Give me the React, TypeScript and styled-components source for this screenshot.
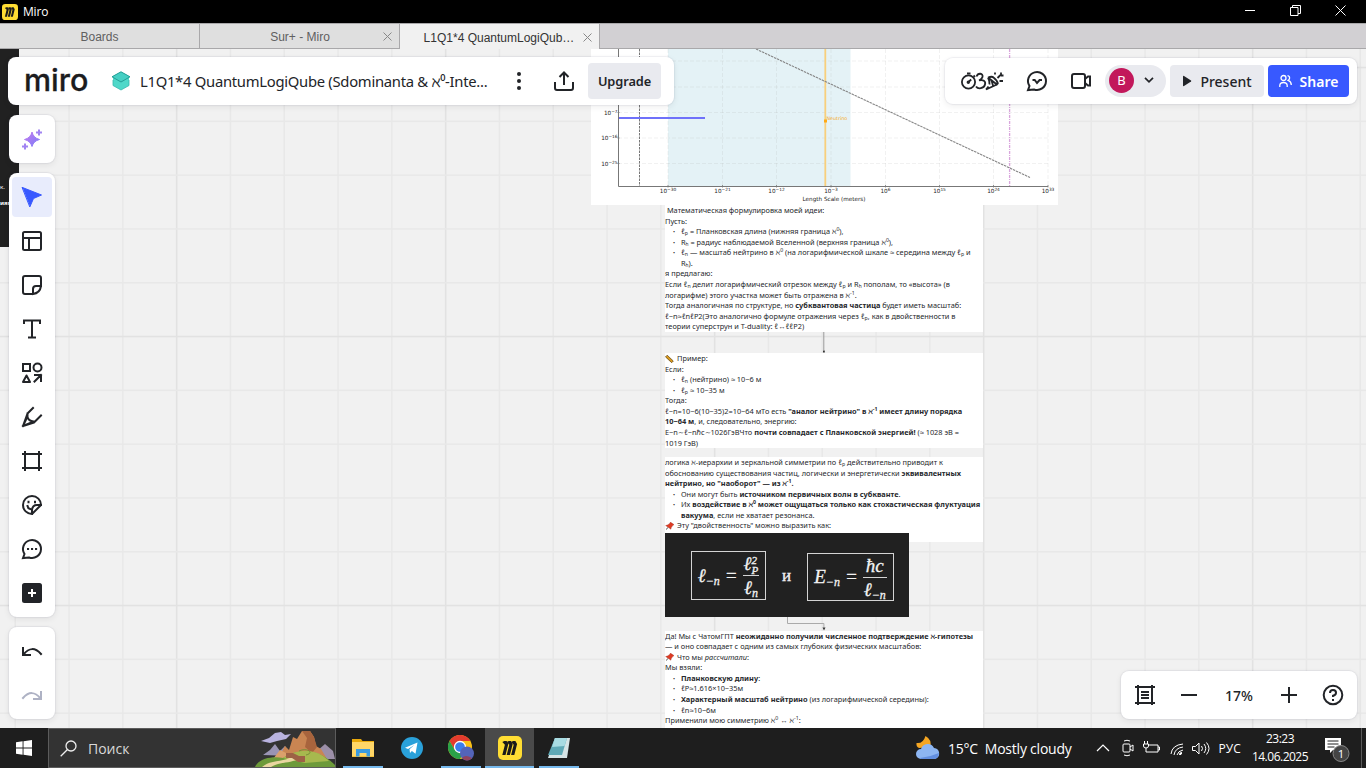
import React from "react";
import styled, { createGlobalStyle } from "styled-components";

const Global = createGlobalStyle`
  * { box-sizing: border-box; }
  body { margin: 0; overflow: hidden; font-family: "Noto Sans", sans-serif; color: #222428; }
  svg { display: block; flex: none; }
`;

const Window = styled.div`
  width: 1366px; height: 768px; display: flex; flex-direction: column; overflow: hidden; background: #000;
`;

/* ---------- title bar and tabs ---------- */
const TitleBar = styled.header`
  height: 23px; display: flex; align-items: center; padding-left: 2px; background: #000; color: #fff;
  font: 12px "Open Sans", sans-serif; flex: none;
`;
const TitleText = styled.span`margin-left: 5px; flex: 1; letter-spacing: -0.2px;`;
const WindowButtons = styled.div`
  display: flex; align-items: center; gap: 34px; padding: 0 20px 3px 0;
`;
const TabStrip = styled.nav`
  height: 26px; flex: none; display: flex; background: #d2d0d3; border-top: 1px solid #a9a8aa; border-bottom: 1px solid #a9a8aa;
  font: 12px "Liberation Sans", sans-serif;
`;
const Tab = styled.div<{ $active?: boolean }>`
  width: 200px; height: ${(p) => (p.$active ? 25 : 24)}px; display: flex; align-items: center; padding: 1px 7px 0 20px;
  border-right: 1px solid #a9a8aa; background: ${(p) => (p.$active ? "#f1f1f1" : "#dfdfdf")};
  color: ${(p) => (p.$active ? "#333" : "#606060")};
`;
const TabLabel = styled.span<{ $pad?: number }>`
  flex: 1; text-align: center; white-space: nowrap; padding-right: ${(p) => p.$pad ?? 0}px; padding-top: 1px;
`;

/* ---------- board ---------- */
const Board = styled.main`
  position: relative; height: 679px; flex: none; overflow: hidden; background: #f1f1f1;
`;
const GridSvg = styled.svg`position: absolute; inset: 0;`;
const Item = styled.div<{ $x: number; $y: number; $w?: number; $h?: number }>`
  position: absolute; left: ${(p) => p.$x}px; top: ${(p) => p.$y}px;
  ${(p) => (p.$w ? `width: ${p.$w}px;` : "")} ${(p) => (p.$h ? `height: ${p.$h}px;` : "")}
`;
const Note = styled(Item)`background: #fff; overflow: hidden; color: #26282c;`;
const Line = styled.div<{ $indent?: boolean; $bullet?: boolean }>`
  height: 10.58px; line-height: 10.58px; font-size: 7.39px; white-space: nowrap; display: flow-root;
  padding-left: ${(p) => (p.$indent || p.$bullet ? 16 : 0)}px;
  sub, sup { font-size: 5.2px; line-height: 0; }
  sub { vertical-align: -1.4px; }
  sup { vertical-align: 2.6px; }
  svg { display: inline-block; vertical-align: -1.5px; margin-right: 3px; }
  ${(p) => (p.$bullet ? `&::before { content: "•"; display: inline-block; width: 8px; margin-left: -8px; font-size: 5.500px; }` : "")}
`;
const DarkImage = styled(Item)`
  background: #212121; color: #f2f2f2; display: flex; align-items: flex-start; padding: 18px 0 0 26px;
  font: 19px/1 "Liberation Serif", serif; -webkit-text-stroke: 0.3px #f2f2f2;
`;
const Formula = styled.div<{ $w: number; $h: number; $top?: number }>`
  width: ${(p) => p.$w}px; height: ${(p) => p.$h}px; border: 1px solid #d4d4d4; margin-top: ${(p) => p.$top ?? 0}px;
  display: flex; align-items: center; justify-content: center; gap: 5px; font-style: italic; white-space: nowrap;
  sub { font-size: 12px; line-height: 0; vertical-align: -3px; }
`;
const Fraction = styled.span`
  display: flex; flex-direction: column; align-items: center;
  span { height: 23px; line-height: 23px; padding: 0 1px; }
  span + span { border-top: 1px solid #d4d4d4; }
`;
const PowerSub = styled.i`
  display: inline-flex; flex-direction: column; vertical-align: 6px; font-size: 11px; line-height: 10px; height: 10px;
`;
const And = styled.span`width: 41px; text-align: center; margin-top: 16px; font-size: 17px;`;
const SideImage = styled(Item)`
  background: #212121; color: #fff; font-size: 6px; line-height: 16px; padding-top: 130px; overflow: hidden; white-space: nowrap;
`;

/* ---------- floating panels ---------- */
const Panel = styled(Item)`
  background: #fff; border-radius: 8px; display: flex; align-items: center;
  box-shadow: 0 0 1px 1px rgba(34, 36, 80, 0.06), 0 2px 6px rgba(34, 36, 40, 0.08);
`;
const Brand = styled.span`
  width: 66px; font: 500 30.5px/48px Inter, sans-serif; color: #1c1c1e; letter-spacing: 0; margin: -3px 0 0 16px;
  -webkit-text-stroke: 0.3px #1c1c1e;
`;
const BoardName = styled.span`font-size: 14.8px; letter-spacing: -0.28px; margin-left: 9px; width: 376px; white-space: nowrap;`;
const Button = styled.button<{ $primary?: boolean; $w: number; $h: number }>`
  width: ${(p) => p.$w}px; height: ${(p) => p.$h}px; border: 0; border-radius: 4px; display: flex; align-items: center;
  justify-content: center; gap: 8px; padding: 0; font: 600 14px "Noto Sans", sans-serif; flex: none;
  background: ${(p) => (p.$primary ? "#3859ff" : "#e9eaef")}; color: ${(p) => (p.$primary ? "#fff" : "#222428")};
`;
const UpgradeButton = styled(Button)`font-size: 12.800px; letter-spacing: -0.1px;`;
const PresentButton = styled(Button)`margin: 0 4px; font-weight: 500;`;
const Tools = styled(Panel)`flex-direction: column; padding: 4px 0;`;
const Tool = styled.div<{ $active?: boolean }>`
  width: 40px; height: 40px; margin-bottom: 4px; border-radius: 4px; display: flex; align-items: center; justify-content: center;
  flex: none; background: ${(p) => (p.$active ? "#e8ecfc" : "transparent")};
`;
const UserPill = styled.div`
  width: 61px; height: 32px; border-radius: 16px; background: #e9eaef; display: flex; align-items: center; padding: 0 0 2px 4px; gap: 10px;
`;
const Avatar = styled.span`
  width: 25px; height: 25px; border-radius: 50%; background: #c2185b; color: #fff; font-size: 13px; line-height: 25px; text-align: center;
`;
const Zoom = styled.span`font-size: 14px; font-weight: 500; width: 32px; text-align: center;`;

/* ---------- taskbar ---------- */
const Taskbar = styled.footer`
  height: 40px; flex: none; display: flex; align-items: stretch; background: #1e1e1e; color: #fff;
  font-family: "Open Sans", sans-serif; font-size: 14px;
`;
const Start = styled.div`width: 48px; display: flex; align-items: center; justify-content: center;`;
const Search = styled.div`
  width: 288px; border: 1px solid #5c5c5c; background: #333; display: flex; align-items: center; color: #d9d9d9; padding-left: 11px;
`;
const SearchText = styled.span`margin-left: 11px; flex: 1;`;
const TaskApp = styled.div<{ $active?: boolean; $open?: boolean }>`
  width: 49px; display: flex; align-items: center; justify-content: center; position: relative;
  background: ${(p) => (p.$active ? "#4a4a4a" : "transparent")};
  ${(p) =>
    p.$open
      ? `&::after { content: ""; position: absolute; bottom: 0; left: ${p.$active ? 0 : 5}px; right: ${p.$active ? 0 : 4}px; height: 2px; background: #76b9ed; }`
      : ""}
`;
const Apps = styled.div`display: flex; margin-left: 2px; flex: 1;`;
const Weather = styled.div`display: flex; align-items: center; width: 180px; gap: 7px; white-space: nowrap; letter-spacing: -0.22px;`;
const Tray = styled.div`display: flex; align-items: center; gap: 8.500px; width: 155px;`;
const Language = styled.span`font-size: 12px;`;
const Clock = styled.div`
  width: 58px; font-size: 12px; line-height: 18px; text-align: center; padding-top: 2px; letter-spacing: -0.5px; white-space: nowrap;
`;
const Notice = styled.div`width: 52px; display: flex; align-items: center; padding-left: 15px;`;
const Edge = styled.div`width: 5px; border-left: 1px solid #5a5a5a;`;

const Icon = ({ s = 24, w = 2, c = "#222428", children }: { s?: number; w?: number; c?: string; children: React.ReactNode }) => (
  <svg width={s} height={s} viewBox="0 0 24 24" fill="none" stroke={c} strokeWidth={w} strokeLinecap="square">
    {children}
  </svg>
);

const MiroMark = ({ s }: { s: number }) => (
  <svg width={s} height={s} viewBox="0 0 24 24">
    <rect width="24" height="24" rx="5" fill="#ffdd33" />
    {[4.3, 8.7, 13.1].map((x) => (
      <path key={x} d={`M${x} 6l2-1h2.300l1.700 3-2.800 11h-3.200l2.600-10.200z`} fill="#1b1b1b" />
    ))}
  </svg>
);

const CloseGlyph = () => (
  <svg width="9" height="9" viewBox="0 0 9 9" stroke="#888"><path d="m.5.500 8 8m0-8-8 8" /></svg>
);

const Pin = () => (
  <svg width="9" height="8" viewBox="0 0 9 8">
    <path d="M1 7.500 3.400 5.200" stroke="#555" strokeWidth="1" />
    <path d="M.6 3.600 3 2.700 4.900 1.200 5.400.1 9 2.600 7.800 3.600 6.400 5.300 5.900 7.300z" fill="#dd3b24" stroke="#8c2a1c" strokeWidth="0.300" />
  </svg>
);
const Ruler = () => (
  <svg width="9" height="8" viewBox="0 0 9 8">
    <path d="M.5 1.900 2.200.2 8.300 6 6.700 7.700z" fill="#d99a1c" stroke="#5c3f10" strokeWidth="0.700" />
  </svg>
);

const GridLines = () => {
  const steps = Array.from({ length: 26 }, (_, i) => i);
  return (
    <GridSvg width="1366" height="679">
      {steps.map((i) => (
        <rect key={"v" + i} x={14.5 + i * 53.8} y="0" width="1.5" height="679" fill={i % 5 === 3 ? "#e2e2e2" : "#e8e8e8"} />
      ))}
      {steps.slice(0, 13).map((i) => (
        <rect key={"h" + i} x="0" y={17.8 + i * 53.8} width="1366" height="1.5" fill={i % 5 === 0 ? "#e2e2e2" : "#e8e8e8"} />
      ))}
    </GridSvg>
  );
};

const xTicks: [number, string][] = [
  [77, "−30"], [131.5, "−21"], [185.5, "−12"], [240, "−3"], [294.5, "6"], [348.5, "15"], [402.5, "24"], [457, "33"],
];
const yTicks: [number, string][] = [[63.5, "−7"], [89, "−16"], [114.5, "−25"]];

const Chart = () => (
  <svg width="467" height="156" viewBox="0 0 467 156" fontFamily="DejaVu Sans" fontSize="5.700" fill="#222">
    <rect width="467" height="156" fill="#fff" />
    <rect x="77" width="182.500" height="137" fill="#e4f2f6" />
    <g stroke="#b0b0b0" strokeOpacity="0.250" strokeWidth="0.700" strokeDasharray="4 2">
      {xTicks.map(([x]) => <path key={x} d={`M${x} 0V137`} />)}
      {[12, 38, 63.5, 89, 114.5].map((y) => <path key={y} d={`M27 ${y}H457`} />)}
    </g>
    <path d="M234.300 0V137" stroke="#f8cf7c" strokeWidth="1.800" />
    <path d="M48.500 0V137" stroke="#777" strokeWidth="1" strokeDasharray="2.500 1" />
    <path d="M418.600 0V137" stroke="#d9a5dc" strokeWidth="1.300" strokeDasharray="3 1 1 1" />
    <path d="M165 0 439 128.500" stroke="#858585" strokeWidth="1.100" strokeDasharray="2.500 .8" />
    <path d="M27 69h87" stroke="#6f71fa" strokeWidth="1.800" />
    <path d="M27.500 0V137.500H457" stroke="#777" strokeWidth="1" fill="none" />
    <g stroke="#777" strokeWidth="0.800">
      {xTicks.map(([x]) => <path key={x} d={`M${x} 136v2.500`} />)}
      {yTicks.map(([y]) => <path key={y} d={`M26.500 ${y}h2`} />)}
    </g>
    <rect x="233" y="70.500" width="3" height="3" fill="#ffa914" />
    <text x="235.500" y="71" fontSize="4.800" fill="#f6a91c">Neutrino</text>
    {xTicks.map(([x, e]) => (
      <text key={x} x={x} y="143.500" textAnchor="middle">10<tspan dy="-1.800" fontSize="4.300">{e}</tspan></text>
    ))}
    {yTicks.map(([y, e]) => (
      <text key={y} x="26.500" y={y + 2} textAnchor="end">10<tspan dy="-1.800" fontSize="4.300">{e}</tspan></text>
    ))}
    <text x="243" y="151.500" textAnchor="middle" fontSize="5.700">Length Scale (meters)</text>
  </svg>
);

const Landscape = () => (
  <svg width="80" height="38" viewBox="0 0 80 38">
    <path d="M6 12 14 9 20 4 26 3 30 6 36 5 31 10 22 12 15 14z" fill="#b9b3df" />
    <path d="M8 26 15 21 20 15 25 22 30 17 36 27z" fill="#9a94b4" />
    <path d="M62 22 70 15 78 22 80 30H60z" fill="#9c8fa8" />
    <path d="M24 28 30 17 34 21 38 8 42 10 47 2 55 2 59 8 61 17 66 20 72 30z" fill="#c98552" />
    <path d="M47 2 52 9 50 18 57 24 62 18 59 8 55 2z" fill="#a8643d" />
    <path d="M18 30 25 21 31 24 36 31z" fill="#dba06b" />
    <path d="M0 38C4 29 18 27 28 29 42 20 62 18 80 36V38z" fill="#6d9a3a" />
    <path d="M28 29C45 18 62 20 74 32L50 34z" fill="#a7b94e" />
    <path d="M7 38C16 30 28 34 38 27l5 3C34 35 26 32 16 38z" fill="#e9d6a0" />
    <path d="M31 24h7l6 3h6v6h-7l-6-4h-6z" fill="#9d6245" />
    <path d="M44 22c8-4 16 2 7 4" stroke="#788f36" fill="none" />
  </svg>
);

export default function App() {
  return (
    <Window>
      <Global />
      <TitleBar>
        <MiroMark s={16} />
        <TitleText>Miro</TitleText>
        <WindowButtons>
          <svg width="11" height="11" viewBox="0 0 11 11"><path d="M0 5.500h10" stroke="#fff" /></svg>
          <svg width="11" height="11" viewBox="0 0 11 11" fill="none" stroke="#fff"><path d="M.5 2.500h7.500v8H.5zM2.500 2.500v-2h8v8H8" /></svg>
          <svg width="11" height="11" viewBox="0 0 11 11" stroke="#fff"><path d="m.5.500 10 10m0-10-10 10" /></svg>
        </WindowButtons>
      </TitleBar>
      <TabStrip>
        <Tab><TabLabel $pad={13}>Boards</TabLabel></Tab>
        <Tab><TabLabel $pad={3}>Sur+ - Miro</TabLabel><CloseGlyph /></Tab>
        <Tab $active><TabLabel $pad={5}>L1Q1*4 QuantumLogiQub…</TabLabel><CloseGlyph /></Tab>
      </TabStrip>

      <Board>
        <GridLines />
        <SideImage $x={0} $y={0} $w={19} $h={198}><div>к.</div><b>иям</b></SideImage>
        <Item $x={591} $y={0}><Chart /></Item>

        <Note $x={665} $y={156} $w={318} $h={127}>
          <Line>&nbsp;Математическая формулировка моей идеи:</Line>
          <Line>Пусть:</Line>
          <Line $bullet>ℓ<sub>p</sub> = Планковская длина (нижняя граница ℵ<sup>0</sup>),</Line>
          <Line $bullet>Rₕ = радиус наблюдаемой Вселенной (верхняя граница ℵ<sup>0</sup>),</Line>
          <Line $bullet>ℓ<sub>n</sub> — масштаб нейтрино в ℵ<sup>0</sup> (на логарифмической шкале ≈ середина между ℓ<sub>p</sub> и</Line>
          <Line $indent>Rₕ).</Line>
          <Line>я предлагаю:</Line>
          <Line>Если ℓ<sub>n</sub> делит логарифмический отрезок между ℓ<sub>p</sub> и Rₕ пополам, то «высота» (в</Line>
          <Line>логарифме) этого участка может быть отражена в ℵ<sup>-1</sup>.</Line>
          <Line>Тогда аналогичная по структуре, но <b>субквантовая частица</b> будет иметь масштаб:</Line>
          <Line>ℓ−n≈ℓnℓP2(Это аналогично формуле отражения через ℓ<sub>p</sub>, как в двойственности в</Line>
          <Line>теории суперструн и T-duality: ℓ↔ℓℓP2)</Line>
        </Note>
        <Note $x={665} $y={304} $w={318} $h={95}>
          <Line><Ruler />Пример:</Line>
          <Line>Если:</Line>
          <Line $bullet>ℓ<sub>n</sub> (нейтрино) ≈ 10−6 м</Line>
          <Line $bullet>ℓ<sub>p</sub> ≈ 10−35 м</Line>
          <Line>Тогда:</Line>
          <Line>ℓ−n=10−6(10−35)2=10−64 мТо есть <b>"аналог нейтрино" в ℵ<sup>-1</sup> имеет длину порядка</b></Line>
          <Line><b>10−64 м</b>, и, следовательно, энергию:</Line>
          <Line>E−n∼ℓ−nℏc∼1026ГэВЧто <b>почти совпадает с Планковской энергией!</b> (≈ 1028 эВ =</Line>
          <Line>1019 ГэВ)</Line>
        </Note>
        <Note $x={665} $y={408} $w={318} $h={85}>
          <Line>логика ℵ-иерархии и зеркальной симметрии по ℓ<sub>p</sub> действительно приводит к</Line>
          <Line>обоснованию существования частиц, логически и энергетически <b>эквивалентных</b></Line>
          <Line><b>нейтрино, но "наоборот" — из ℵ<sup>-1</sup>.</b></Line>
          <Line $bullet>Они могут быть <b>источником первичных волн в субкванте</b>.</Line>
          <Line $bullet>Их <b>воздействие в ℵ<sup>0</sup> может ощущаться только как стохастическая флуктуация</b></Line>
          <Line $indent><b>вакуума</b>, если не хватает резонанса.</Line>
          <Line><Pin />Эту "двойственность" можно выразить как:</Line>
        </Note>
        <DarkImage $x={665} $y={483.5} $w={244} $h={84.5}>
          <Formula $w={75} $h={49}>
            <span>ℓ<sub>−n</sub></span><span>=</span>
            <Fraction><span>ℓ<PowerSub><i>2</i><i>P</i></PowerSub></span><span>ℓ<sub>n</sub></span></Fraction>
          </Formula>
          <And>и</And>
          <Formula $w={87} $h={48} $top={2}>
            <span>E<sub>−n</sub></span><span>=</span>
            <Fraction><span>ħc</span><span>ℓ<sub>−n</sub></span></Fraction>
          </Formula>
        </DarkImage>
        <Item $x={780} $y={283}>
          <svg width="50" height="21" viewBox="0 0 50 21"><path d="M43.800 0v18" stroke="#999" fill="none" /><path d="M43 18.500h1.800v2h-1.800z" fill="#333" /></svg>
        </Item>
        <Item $x={780} $y={568}>
          <svg width="50" height="14" viewBox="0 0 50 14"><path d="M7.500 0v6.500h36.400v4" stroke="#aaa" fill="none" /><path d="m42.500 10.500h3L44 13.500z" fill="#333" /></svg>
        </Item>
        <Note $x={665} $y={581.5} $w={318} $h={98}>
          <Line>Да! Мы с ЧатомГПТ <b>неожиданно получили численное подтверждение ℵ-гипотезы</b></Line>
          <Line>— и оно совпадает с одним из самых глубоких физических масштабов:</Line>
          <Line><Pin />Что мы <i>рассчитали</i>:</Line>
          <Line>Мы взяли:</Line>
          <Line $bullet><b>Планковскую длину</b>:</Line>
          <Line $bullet>ℓP≈1.616×10−35м</Line>
          <Line $bullet><b>Характерный масштаб нейтрино</b> (из логарифмической середины):</Line>
          <Line $bullet>ℓn≈10−6м</Line>
          <Line>Применили мою симметрию ℵ<sup>0</sup> ↔ ℵ<sup>-1</sup>:</Line>
        </Note>

        <Panel $x={8} $y={8} $w={666} $h={48}>
          <Brand>miro</Brand>
          <svg width="20" height="20" viewBox="0 0 20 20" style={{ marginLeft: 21 }}>
            <path d="M10 .8 18 5.500V14.500L10 19 2 14.500V5.500z" fill="#4fd8c9" />
            <path d="M10 .8 19 5.800 10 11 1 5.800z" fill="#45cfc3" stroke="#249e96" strokeWidth="1" />
            <path d="M2 9v5.500L10 19l8-4.500V9" fill="none" stroke="#35b9ad" strokeWidth=".8" />
          </svg>
          <BoardName>L1Q1*4 QuantumLogiQube (Sdominanta &amp; ℵ⁰-Inte...</BoardName>
          <svg width="6" height="20" viewBox="0 0 6 20" fill="#222428"><circle cx="3" cy="3" r="2" /><circle cx="3" cy="10" r="2" /><circle cx="3" cy="17" r="2" /></svg>
          <svg width="22" height="22" viewBox="0 0 22 22" fill="none" stroke="#222428" strokeWidth="2" style={{ margin: "0 13px 0 31px" }}>
            <path d="M2 12v6q0 2 2 2h14q2 0 2-2v-6M11 15V3M6.500 7 11 2.500 15.500 7" />
          </svg>
          <UpgradeButton $w={73} $h={36}>Upgrade</UpgradeButton>
        </Panel>

        <Panel $x={945} $y={9} $w={412} $h={46}>
          <svg width="44" height="24" viewBox="0 0 44 24" fill="none" stroke="#222428" strokeWidth="1.800" style={{ marginLeft: 15 }}>
            <circle cx="8.500" cy="13" r="6.600" /><path d="M7 4.500h3.500M8.500 13l2.700-2.500M13.500 6.500l1.500 1.500" /><circle cx="8.300" cy="13.300" r=".8" />
            <path d="M16.500 7.500C18 3.500 23.500 4 22.500 8c-.4 1.700-2 2.800-3.500 3.500 4-1.200 7 .5 6 4-1 4.300-7 5-9 2" />
            <path d="M26 20.500 38 15M26 20.500l2.500-3M28 8.500l9.500 7.500M28 8.500q2 4 1.500 7M28 8.500q4-1.500 5.500 0 4 3 4.500 6.500M31.500 11.500l1.500 5M35 5.500V3.500M37.500 9l3.500-3.500M39.500 12H43M41 6.500V3.500M41 6.500h2.500" />
          </svg>
          <svg width="24" height="24" viewBox="0 0 24 24" fill="none" stroke="#222428" strokeWidth="2" style={{ marginLeft: 21 }}>
            <path d="M4.500 17A9 9 0 1 1 9 20.500L3 21zM7.500 11h2.200l2.300 3 2.600-3H17" />
          </svg>
          <svg width="24" height="24" viewBox="0 0 24 24" fill="none" stroke="#222428" strokeWidth="2" style={{ margin: "0 12px 0 20px" }}>
            <rect x="3" y="5" width="13" height="14" rx="2" /><path d="m16 10 3-2.500h2v9h-2L16 14" />
          </svg>
          <UserPill>
            <Avatar>B</Avatar>
            <svg width="10" height="6" viewBox="0 0 10 6" fill="none" stroke="#222428" strokeWidth="1.700"><path d="m1 .8 4 4 4-4" /></svg>
          </UserPill>
          <PresentButton $w={94} $h={32}>
            <svg width="10" height="12" viewBox="0 0 10 12"><path d="M1 1.500v9q0 1 1 .5l7-4.500q.6-.5 0-1L2 1Q1 .5 1 1.500z" fill="#222428" /></svg>
            Present
          </PresentButton>
          <Button $primary $w={81} $h={32}>
            <svg width="13" height="14" viewBox="0 0 13 14" fill="none" stroke="#fff" strokeWidth="1.300">
              <circle cx="4.500" cy="4" r="2.500" /><path d="M.8 13v-1.500Q1 8.500 4.500 8.500t3.700 3V13M8.500 1.600q2.500.4 2 3-.3 1.200-1.300 1.800Q12.300 7.500 12.300 11" />
            </svg>
            Share
          </Button>
        </Panel>

        <Panel $x={9} $y={66} $w={46} $h={48}>
          <svg width="46" height="48" viewBox="0 0 46 48">
            <defs><linearGradient id="spark" x1="0" y1="0" x2="1" y2="1"><stop offset="0" stopColor="#c47bef" /><stop offset="1" stopColor="#7b7cf8" /></linearGradient></defs>
            <path d="M23 17q1.500 6 7.500 7.500Q24.500 26 23 31.500 21.500 26 15.500 24.500 21.500 23 23 17z" fill="url(#spark)" stroke="url(#spark)" strokeLinejoin="round" />
            <path d="M30 14.500v6M27 17.500h6M16 28.500v6M13 31.500h6" stroke="#a184f2" strokeWidth="2" />
          </svg>
        </Panel>

        <Tools $x={9} $y={124} $w={46} $h={444}>
          <Tool $active><Icon><path d="m2.500 2.500 19 7.500-8 3.500L10 21.500z" fill="#3859ff" stroke="#3859ff" strokeWidth="1" strokeLinejoin="round" /></Icon></Tool>
          <Tool><Icon><rect x="3" y="3" width="18" height="18" rx="1.500" /><path d="M3 9h18M9 9v12" /></Icon></Tool>
          <Tool><Icon><path d="M13 21H5q-2 0-2-2V5q0-2 2-2h14q2 0 2 2v8q-1 7-8 8v-5q0-3 3-3h5" /></Icon></Tool>
          <Tool><Icon><path d="M4 6V3.500h16V6M12 3.500V20.500M9 20.500h6" /></Icon></Tool>
          <Tool><Icon><rect x="3" y="3" width="7" height="7" /><circle cx="17.500" cy="6.500" r="4" /><path d="m6.500 14.500 3.500 6.500H3zM14.500 20.500 21 14M15 14h6v6" strokeLinejoin="round" /></Icon></Tool>
          <Tool><Icon><path d="M13 3 7.500 8.500 3 21l11-3.500L21 10.500M7.500 8.500V12q1 4 6 4.500M3 21l4-8.500M3 21l9.500-4" strokeLinejoin="round" /></Icon></Tool>
          <Tool><Icon><path d="M5 3v18M19 3v18M3 5h18M3 19h18" /></Icon></Tool>
          <Tool><Icon><path d="M12 21A9 9 0 1 1 21 12L12 21v-4q.5-5 5-5h4" strokeLinejoin="round" /><path d="M7.500 13q.5 3 3.500 3.300" /><path d="M8.500 8.800v.4M15 8.800v.4" /></Icon></Tool>
          <Tool><Icon><path d="M4.500 17A9 9 0 1 1 9 20.500L3 21z" /><path d="M8 12h.1M12 12h.1M16 12h.1" /></Icon></Tool>
          <Tool><Icon><rect x="3" y="3" width="18" height="18" rx="1.500" fill="#222428" /><path d="M12 9v6M9 12h6" stroke="#fff" /></Icon></Tool>
        </Tools>

        <Tools $x={9} $y={578} $w={46} $h={92}>
          <Tool><Icon><path d="M3 9v7h7M3.500 15.500Q12 5 21 15" /></Icon></Tool>
          <Tool><Icon c="#aeb2c4"><path d="M21 9v7h-7M20.500 15.500Q12 5 3 15" /></Icon></Tool>
        </Tools>

        <Panel $x={1121} $y={622} $w={236} $h={48}>
          <svg width="24" height="24" viewBox="0 0 24 24" fill="none" stroke="#222428" strokeWidth="2" style={{ marginLeft: 12 }}>
            <path d="M5 2v20M19 2v20M2 4h20M2 20h20M8 9h8M8 12h8M8 15h8" />
          </svg>
          <svg width="16" height="16" viewBox="0 0 16 16" stroke="#222428" strokeWidth="2" style={{ margin: "0 26px 0 24px" }}><path d="M0 8h16" /></svg>
          <Zoom>17%</Zoom>
          <svg width="16" height="16" viewBox="0 0 16 16" stroke="#222428" strokeWidth="2" style={{ margin: "0 24px 0 26px" }}><path d="M0 8h16M8 0v16" /></svg>
          <svg width="24" height="24" viewBox="0 0 24 24" fill="none" stroke="#222428" strokeWidth="2">
            <circle cx="12" cy="12" r="9.300" /><path d="M9 10q0-3 3-3t3 2.700q0 2.300-3 3v1.300M12 16v2" />
          </svg>
        </Panel>
      </Board>

      <Taskbar>
        <Start>
          <svg width="16" height="16" viewBox="0 0 16 16" fill="#fff"><path d="M0 2.200 6.600 1.300V7.600H0zM7.500 1.200 16 0V7.600H7.500zM0 8.400h6.600v6.300L0 13.800zM7.500 8.400H16V16l-8.500-1.200z" /></svg>
        </Start>
        <Search>
          <svg width="17" height="17" viewBox="0 0 17 17" fill="none" stroke="#eee" strokeWidth="1.300"><circle cx="11" cy="6" r="5" /><path d="M7.500 9.500.7 16.300" /></svg>
          <SearchText>Поиск</SearchText>
          <Landscape />
        </Search>
        <Apps>
          <TaskApp $open>
            <svg width="22" height="20" viewBox="0 0 22 20"><path d="M0 1h9l1.500 2H22v16H0z" fill="#e9a90c" /><path d="M0 4h22v14.500H0z" fill="#ffd667" /><path d="M4 11h14v7.500h-3.500V15h-7v3.500H4z" fill="#3a9be0" /></svg>
          </TaskApp>
          <TaskApp>
            <svg width="22" height="22" viewBox="0 0 22 22"><circle cx="11" cy="11" r="11" fill="#2aa1da" /><path d="m4 10.700 12.500-5.200-2 11.300-3.600-2.700-1.900 1.800-.5-3.700 4.800-4.100-6.200 3.900z" fill="#fff" /></svg>
          </TaskApp>
          <TaskApp $open>
            <svg width="26" height="26" viewBox="0 0 26 26"><circle cx="12" cy="12" r="12" fill="#fbc116" /><path d="M1.600 6A12 12 0 0 1 22.400 6H12L6.800 15z" fill="#e33b2e" /><path d="M1.600 6A12 12 0 0 0 12 24l5.200-9-10.400 0z" fill="#2aa148" /><circle cx="12" cy="12" r="5.500" fill="#3b7ded" stroke="#fff" strokeWidth="1.300" /><circle cx="19" cy="18.500" r="7" fill="#5364b9" /><path d="M14 23q3-4 10 0-5 5-10 0z" fill="#91435e" /></svg>
          </TaskApp>
          <TaskApp $open $active><MiroMark s={24} /></TaskApp>
          <TaskApp $open>
            <svg width="24" height="24" viewBox="0 0 24 24"><path d="M8 2h15l-3 20H1z" fill="#d6e4e6" /><path d="M8 2h12l-5 17H1z" fill="#5fa9b6" /><path d="M8 2h12l-2.500 8L5 11z" fill="#a8dbe2" /></svg>
          </TaskApp>
        </Apps>
        <Weather>
          <svg width="25" height="24" viewBox="0 0 25 24"><path d="M9.500 0q7 4 4.500 11L3 12Q0 11 .5 7 7 8 9.500 0z" fill="#f5a623" /><path d="M5 23a5 5 0 0 1 0-10 7 7 0 0 1 13-1 5.600 5.600 0 0 1 1 11z" fill="#8db6f2" /><path d="M4 22q10-1 19-5-1 6-5 6H5z" fill="#628fe0" /></svg>
          <span>15°C&nbsp; Mostly cloudy</span>
        </Weather>
        <Tray>
          <svg width="14" height="8" viewBox="0 0 14 8" fill="none" stroke="#fff" strokeWidth="1.200"><path d="m1 7 6-6 6 6" /></svg>
          <svg width="16" height="18" viewBox="0 0 16 18" fill="none" stroke="#fff"><path d="M5 2q3-1.500 6 0M5 16q3 1.500 6 0" /><rect x="4" y="5" width="7" height="8" rx="1" /><path d="m11 8 3-2v6l-3-2" /></svg>
          <svg width="17" height="16" viewBox="0 0 17 16" fill="none" stroke="#fff"><path d="M6 5h9v7H5M15 7h1.500v3H15M1.500 1v3M4.500 1v3M.5 4h5v2q0 2-2.500 2T.5 6zM3 8v4h2" /></svg>
          <svg width="15" height="15" viewBox="0 0 15 15" fill="none" stroke="#fff"><path d="M2 13Q3 4 14 3M5 14q1-7 9-8M8 14q1-4 6-5" /><path d="M11 14q0-2 2-2" strokeWidth="2" /></svg>
          <svg width="18" height="15" viewBox="0 0 18 15" fill="none" stroke="#fff"><path d="M.5 5.500h3L7 2v11L3.500 9.500h-3zM9.500 5q2 2.500 0 5M12 3q3.500 4.500 0 9M14.500 1.500q5 6 0 12" /></svg>
          <Language>РУС</Language>
        </Tray>
        <Clock>23:23<br />14.06.2025</Clock>
        <Notice>
          <svg width="26" height="28" viewBox="0 0 26 28"><path d="M1 4h16v12H9l-3 3v-3H1z" fill="#fff" /><path d="M3.500 7h11M3.500 10h11M3.500 13h7" stroke="#1e1e1e" /><circle cx="17" cy="19.500" r="8" fill="#444" stroke="#888" /><text x="17" y="23.500" fontSize="11.500" textAnchor="middle" fill="#fff">1</text></svg>
        </Notice>
        <Edge />
      </Taskbar>
    </Window>
  );
}
